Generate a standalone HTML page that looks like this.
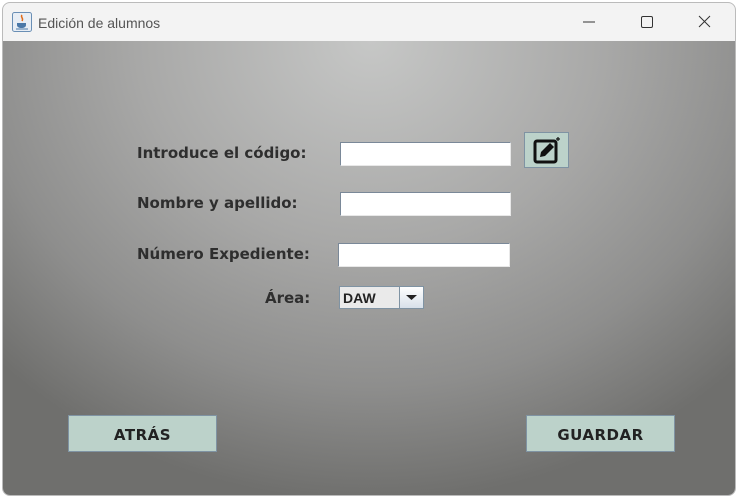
<!DOCTYPE html>
<html><head><style>
*{margin:0;padding:0;box-sizing:border-box}
body{width:737px;height:497px;background:#fff;position:relative;overflow:hidden;font-family:"DejaVu Sans","Liberation Sans",sans-serif}
.win{position:absolute;left:2px;top:2px;width:734px;height:494px;border:1px solid #bbb;border-radius:8px;background:#f3f3f3;overflow:hidden}
.title{position:absolute;left:35px;top:12px;font-size:14px;color:#555;font-family:"Liberation Sans",sans-serif}
.content{position:absolute;left:0;top:38px;width:733px;height:455px;background:radial-gradient(ellipse 520px 460px at 368px 0px,#c6c7c6 0%,#a8a8a7 45%,#8e8e8d 75%,#6f6f6d 100%)}
.lbl{position:absolute;font-weight:bold;font-size:15px;color:#2e2e2e}
.tf{position:absolute;background:#fff;border:1px solid #7a8898;border-right-color:#e8e8e8;border-bottom-color:#e8e8e8;box-shadow:inset 1px 1px 0 #fff}
.btn{position:absolute;background:#bcd2ca;border:1px solid #7f93a3;font-weight:bold;font-size:15px;color:#222;text-align:center;letter-spacing:0.5px}
</style></head><body>
<div class="win">
 <svg style="position:absolute;left:9px;top:9px" width="20" height="20"><rect x="0.5" y="0.5" width="19" height="19" rx="2" fill="#e8eef5" stroke="#6a8fb5"/><path d="M10 3c-2 2 2 3 0 6" stroke="#e06a1a" stroke-width="1.5" fill="none"/><path d="M5 11h9v2c0 2-2 3-4.5 3S5 15 5 13z" fill="#4a78a8"/><path d="M4 17h12" stroke="#4a78a8"/></svg>
 <div class="title">Edición de alumnos</div>
 <svg style="position:absolute;left:578px;top:11px" width="140" height="16"><path d="M2 8h12" stroke="#333"/><rect x="60.5" y="2.5" width="11" height="11" rx="1.5" fill="none" stroke="#333"/><path d="M118 2l11 11M129 2l-11 11" stroke="#333"/></svg>
 <div class="content">
  <div class="lbl" style="left:134px;top:103px">Introduce el código:</div>
  <div class="lbl" style="left:134px;top:153px">Nombre y apellido:</div>
  <div class="lbl" style="left:134px;top:204px">Número Expediente:</div>
  <div class="lbl" style="left:262px;top:248px">Área:</div>
  <div class="tf" style="left:337px;top:101px;width:171px;height:24px"></div>
  <div class="tf" style="left:337px;top:151px;width:171px;height:24px"></div>
  <div class="tf" style="left:335px;top:202px;width:172px;height:24px"></div>
  <div style="position:absolute;left:336px;top:245px;width:85px;height:23px;border:1px solid #7f93a3;background:#eaeaea">
   <span style="position:absolute;left:3px;top:3px;font-family:'Liberation Sans',sans-serif;font-weight:bold;font-size:14px;color:#222">DAW</span>
   <div style="position:absolute;left:59px;top:0;width:24px;height:21px;border-left:1px solid #7f93a3;background:linear-gradient(#fff,#d7e0ea)"><svg width="24" height="21"><path d="M6 8h11l-5.5 5z" fill="#222"/></svg></div>
  </div>
  <div style="position:absolute;left:521px;top:91px;width:45px;height:36px;background:#bcd2ca;border:1px solid #7f93a3">
   <svg width="43" height="34"><rect x="10" y="8" width="21" height="21" rx="2" fill="none" stroke="#111" stroke-width="3"/><path d="M15 24l1-5 9-9 4 4-9 9z" fill="#111"/><path d="M33 4v4M31 6h4" stroke="#111" stroke-width="1.2"/></svg>
  </div>
  <div class="btn" style="left:65px;top:374px;width:149px;height:37px;line-height:39px">ATRÁS</div>
  <div class="btn" style="left:523px;top:374px;width:149px;height:37px;line-height:39px">GUARDAR</div>
 </div>
</div>
</body></html>
